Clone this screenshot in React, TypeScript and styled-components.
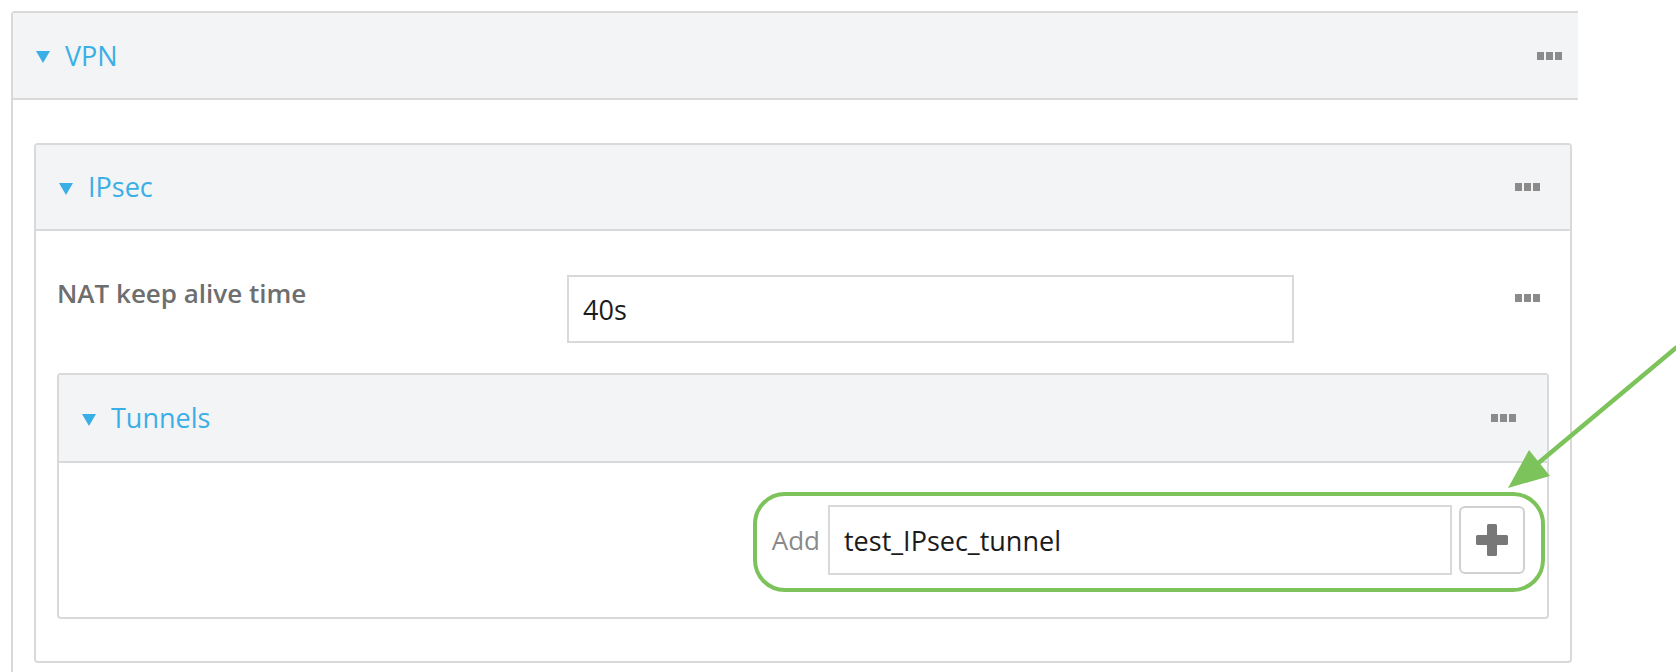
import React from "react";
import styled, { createGlobalStyle } from "styled-components";

const GlobalStyle = createGlobalStyle`
  * { box-sizing: border-box; }
  html, body { margin: 0; padding: 0; background: #ffffff; }
  body { font-family: "Open Sans", "Noto Sans", "Liberation Sans", sans-serif; }
`;

const BORDER = "#d9d9d9";
const HEADER_BG = "#f3f4f6";
const BLUE = "#3aafe6";
const GREEN = "#7dc35b";

const Page = styled.div`
  position: relative;
  width: 1676px;
  height: 672px;
  overflow: hidden;
  padding: 11px 0 0 11px;
  background: #ffffff;
`;

const Panel = styled.section<{ $cropped?: boolean; $width?: number }>`
  width: ${(p) => (p.$width ? `${p.$width}px` : "auto")};
  border: 2px solid ${BORDER};
  border-right-width: ${(p) => (p.$cropped ? 0 : 2)}px;
  border-radius: ${(p) => (p.$cropped ? "4px 0 0 0" : "4px")};
  background: #ffffff;
`;

const PanelHeader = styled.header<{ $menuInset: number; $height: number }>`
  display: flex;
  align-items: center;
  height: ${(p) => p.$height}px;
  padding: 0 ${(p) => p.$menuInset}px 0 23px;
  background: ${HEADER_BG};
  border-bottom: 2px solid ${BORDER};
`;

const Caret = styled.span`
  width: 0;
  height: 0;
  border-left: 7px solid transparent;
  border-right: 7px solid transparent;
  border-top: 12px solid ${BLUE};
  margin-top: 3px;
`;

const Title = styled.h2`
  flex: 1;
  margin: 0 0 0 15px;
  font-size: 27px;
  font-weight: 400;
  line-height: 36px;
  color: ${BLUE};
`;

const Dots = styled.span`
  display: flex;
  gap: 2px;
`;

const Dot = styled.span`
  width: 7px;
  height: 8px;
  background: #8b8b8b;
`;

const MoreMenu = () => (
  <Dots aria-label="more">
    <Dot />
    <Dot />
    <Dot />
  </Dots>
);

const PanelBody = styled.div<{ $pad: string }>`
  padding: ${(p) => p.$pad};
`;

const FieldRow = styled.div`
  display: grid;
  grid-template-columns: 510px 727px 1fr;
  align-items: start;
`;

const FieldLabel = styled.label`
  font-size: 26px;
  font-weight: 600;
  line-height: 36px;
  color: #6e6e6e;
`;

const TextInput = styled.input<{ $width: number; $height: number }>`
  width: ${(p) => p.$width}px;
  height: ${(p) => p.$height}px;
  border: 2px solid ${BORDER};
  border-radius: 0;
  padding: 0 14px;
  font-family: inherit;
  font-size: 27px;
  color: #1b1b1b;
  background: #ffffff;
  outline: none;
`;

const RowMenu = styled.div`
  display: flex;
  justify-content: flex-end;
  padding: 19px 9px 0 0;
`;

const Nested = styled.div`
  margin-top: 30px;
`;

const AddRow = styled.div`
  display: flex;
  justify-content: flex-end;
  align-items: center;
`;

const AddLabel = styled.span`
  font-size: 26px;
  color: #8a8a8a;
  margin-right: 8px;
`;

const AddButton = styled.button`
  display: flex;
  align-items: center;
  justify-content: center;
  width: 66px;
  height: 68px;
  margin-left: 7px;
  padding: 0;
  border: 2px solid #d0d0d0;
  border-radius: 6px;
  background: #ffffff;
`;

const Highlight = styled.div`
  position: absolute;
  left: 753px;
  top: 492px;
  width: 792px;
  height: 100px;
  border: 4px solid ${GREEN};
  border-radius: 32px;
  pointer-events: none;
`;

const ArrowLayer = styled.svg`
  position: absolute;
  left: 0;
  top: 0;
  pointer-events: none;
`;

const PlusIcon = () => (
  <svg width="32" height="32" viewBox="0 0 32 32">
    <rect x="0" y="11" width="32" height="10" rx="1.5" fill="#787878" />
    <rect x="11" y="0" width="10" height="32" rx="1.5" fill="#787878" />
  </svg>
);

export default function App() {
  return (
    <>
      <GlobalStyle />
      <Page>
        <Panel $cropped $width={1567}>
          <PanelHeader $menuInset={16} $height={87}>
            <Caret />
            <Title>VPN</Title>
            <MoreMenu />
          </PanelHeader>
          <PanelBody $pad="43px 6px 43px 21px">
            <Panel>
              <PanelHeader $menuInset={30} $height={86}>
                <Caret />
                <Title>IPsec</Title>
                <MoreMenu />
              </PanelHeader>
              <PanelBody $pad="44px 21px 42px 21px">
                <FieldRow>
                  <FieldLabel>NAT keep alive time</FieldLabel>
                  <TextInput $width={727} $height={68} defaultValue="40s" readOnly />
                  <RowMenu>
                    <MoreMenu />
                  </RowMenu>
                </FieldRow>
                <Nested>
                  <Panel>
                    <PanelHeader $menuInset={31} $height={88}>
                      <Caret />
                      <Title>Tunnels</Title>
                      <MoreMenu />
                    </PanelHeader>
                    <PanelBody $pad="42px 22px 42px 22px">
                      <AddRow>
                        <AddLabel>Add</AddLabel>
                        <TextInput $width={624} $height={70} defaultValue="test_IPsec_tunnel" readOnly />
                        <AddButton aria-label="Add">
                          <PlusIcon />
                        </AddButton>
                      </AddRow>
                    </PanelBody>
                  </Panel>
                </Nested>
              </PanelBody>
            </Panel>
          </PanelBody>
        </Panel>
        <Highlight />
        <ArrowLayer width="1676" height="672" viewBox="0 0 1676 672">
          <line x1="1677" y1="347" x2="1536" y2="465" stroke={GREEN} strokeWidth="4.5" />
          <polygon points="1508,488 1529,450 1550,476" fill={GREEN} />
        </ArrowLayer>
      </Page>
    </>
  );
}
